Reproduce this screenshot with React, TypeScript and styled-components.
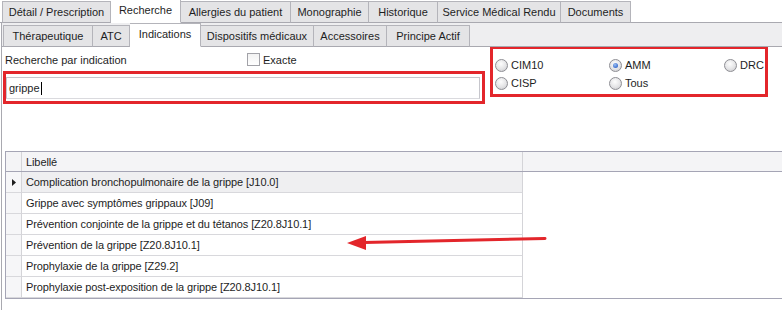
import React from 'react'
import styled, { createGlobalStyle } from 'styled-components'

const GlobalStyle = createGlobalStyle`
  html, body {
    margin: 0;
    padding: 0;
    background: #ffffff;
  }
  body {
    font-family: "Liberation Sans", Arial, sans-serif;
    font-size: 11px;
    color: #1e1e1e;
  }
`

const Window = styled.div`
  position: relative;
  width: 782px;
  height: 310px;
  overflow: hidden;
  background: #ffffff;
`

const TabStrip = styled.div<{ $band?: boolean }>`
  display: flex;
  align-items: flex-end;
  height: ${(p) => (p.$band ? '24px' : '23px')};
  padding-left: ${(p) => (p.$band ? '1px' : '2px')};
  background: ${(p) => (p.$band ? '#eeeef0' : '#ffffff')};
  border-bottom: 1px solid #a9a9b0;
  box-sizing: border-box;
  position: relative;
`

const Tab = styled.div<{ $active?: boolean; $width: number }>`
  width: ${(p) => p.$width}px;
  flex: none;
  height: ${(p) => (p.$active ? '24px' : '22px')};
  margin-bottom: -1px;
  display: flex;
  align-items: center;
  justify-content: center;
  box-sizing: border-box;
  background: ${(p) => (p.$active ? '#ffffff' : '#e4e4e6')};
  border: 1px solid #b4b4ba;
  border-bottom: ${(p) => (p.$active ? '1px solid #ffffff' : '1px solid #a9a9b0')};
  border-left: none;
  color: #1e1e1e;
  white-space: nowrap;
  position: relative;
  z-index: ${(p) => (p.$active ? 2 : 1)};
  padding-bottom: ${(p) => (p.$active ? '3px' : '0')};
  &:first-child {
    border-left: 1px solid #b4b4ba;
  }
`

const Page = styled.div`
  border-left: 1px solid #a9a9b0;
  margin-left: 1px;
  height: 400px;
`

const SearchRow = styled.div`
  display: flex;
  align-items: flex-start;
  padding-left: 1px;
`

const LeftColumn = styled.div`
  width: 482px;
  display: flex;
  flex-direction: column;
`

const LabelRow = styled.div`
  display: flex;
  align-items: center;
  height: 24px;
  padding: 2px 0 0 2px;
  box-sizing: border-box;
`

const Label = styled.span`
  width: 242px;
`

const CheckBox = styled.span`
  width: 11px;
  height: 11px;
  border: 1px solid #a2a2a8;
  background: linear-gradient(#f2f2f2, #ffffff);
  margin-right: 3px;
  margin-top: -1px;
`

const RedFrame = styled.div`
  border: 3px solid #e3262b;
  box-sizing: border-box;
`

const InputFrame = styled(RedFrame)`
  height: 33px;
  padding: 3px 2px 2px 0;
`

const TextInput = styled.div`
  height: 22px;
  border: 1px solid #c6c6cc;
  border-bottom-color: #dadade;
  box-sizing: border-box;
  display: flex;
  align-items: center;
  padding-left: 2px;
  color: #1e1e1e;
  background: #ffffff;
`

const Caret = styled.span`
  display: inline-block;
  width: 1px;
  height: 13px;
  background: #000000;
  margin-left: 1px;
`

const RadioFrame = styled(RedFrame)`
  width: 278px;
  height: 51px;
  margin-top: -1px;
  margin-left: 5px;
  padding: 7px 0 0 2px;
  display: grid;
  grid-template-columns: 114px 115px 1fr;
  grid-auto-rows: 18px;
`

const RadioItem = styled.label`
  display: flex;
  align-items: center;
  gap: 3px;
  white-space: nowrap;
`

const RadioDot = styled.span<{ $checked?: boolean }>`
  width: 11px;
  height: 11px;
  flex: none;
  border-radius: 50%;
  border: 1px solid #8e8e94;
  background: radial-gradient(circle at 45% 35%, #fdfdfd 0%, #e4e4e6 55%, #c4c4c8 100%);
  display: flex;
  align-items: center;
  justify-content: center;
  &::after {
    content: '';
    display: ${(p) => (p.$checked ? 'block' : 'none')};
    width: 5px;
    height: 5px;
    border-radius: 50%;
    background: radial-gradient(circle at 40% 35%, #9cc0f2 0%, #3d6fcf 70%, #2a55a8 100%);
  }
`

const Grid = styled.div`
  margin: 47px 0 0 3px;
  border: 1px solid #a5a5b5;
  border-right: none;
  width: 790px;
`

const GridRow = styled.div<{ $header?: boolean }>`
  display: flex;
  height: ${(p) => (p.$header ? '20px' : '21px')};
  background: ${(p) => (p.$header ? '#f4f4f6' : '#ffffff')};
  border-bottom: ${(p) => (p.$header ? '1px solid #a5a5b5' : 'none')};
  box-sizing: border-box;
`

const Indicator = styled.div<{ $header?: boolean }>`
  width: 16px;
  flex: none;
  border-right: 1px solid #d4d4d8;
  border-bottom: ${(p) => (p.$header ? 'none' : '1px solid #d8d8dc')};
  background: ${(p) => (p.$header ? '#f4f4f6' : '#f6f6f8')};
  box-sizing: border-box;
  display: flex;
  align-items: center;
  justify-content: center;
`

const Cell = styled.div<{ $header?: boolean; $selected?: boolean }>`
  width: 501px;
  flex: none;
  padding-left: 4px;
  display: flex;
  align-items: center;
  box-sizing: border-box;
  border-right: 1px solid #d4d4d8;
  border-bottom: ${(p) => (p.$header ? 'none' : '1px solid #d8d8dc')};
  background: ${(p) => (p.$selected ? '#efeff1' : 'transparent')};
  color: #1e1e1e;
  letter-spacing: -0.1px;
`

const Filler = styled.div`
  flex: 1;
`

const Arrow = styled.svg`
  position: absolute;
  left: 340px;
  top: 228px;
`

const topTabs = [
  { label: 'Détail / Prescription', width: 109 },
  { label: 'Recherche', width: 70, active: true },
  { label: 'Allergies du patient', width: 110 },
  { label: 'Monographie', width: 78 },
  { label: 'Historique', width: 69 },
  { label: 'Service Médical Rendu', width: 123 },
  { label: 'Documents', width: 70 },
]

const subTabs = [
  { label: 'Thérapeutique', width: 90 },
  { label: 'ATC', width: 37 },
  { label: 'Indications', width: 71, active: true },
  { label: 'Dispositifs médicaux', width: 113 },
  { label: 'Accessoires', width: 73 },
  { label: 'Principe Actif', width: 83 },
]

const rows = [
  'Complication bronchopulmonaire de la grippe [J10.0]',
  'Grippe avec symptômes grippaux [J09]',
  'Prévention conjointe de la grippe et du tétanos [Z20.8J10.1]',
  'Prévention de la grippe [Z20.8J10.1]',
  'Prophylaxie de la grippe [Z29.2]',
  'Prophylaxie post-exposition de la grippe [Z20.8J10.1]',
]

const radios = [
  { label: 'CIM10' },
  { label: 'AMM', checked: true },
  { label: 'DRC' },
  { label: 'CISP' },
  { label: 'Tous' },
]

export default function App() {
  return (
    <Window>
      <GlobalStyle />
      <TabStrip>
        {topTabs.map((t) => (
          <Tab key={t.label} $active={t.active} $width={t.width}>
            {t.label}
          </Tab>
        ))}
      </TabStrip>
      <Page>
        <TabStrip $band>
          {subTabs.map((t) => (
            <Tab key={t.label} $active={t.active} $width={t.width}>
              {t.label}
            </Tab>
          ))}
        </TabStrip>
        <SearchRow>
          <LeftColumn>
            <LabelRow>
              <Label>Recherche par indication</Label>
              <CheckBox />
              Exacte
            </LabelRow>
            <InputFrame>
              <TextInput>
                grippe
                <Caret />
              </TextInput>
            </InputFrame>
          </LeftColumn>
          <RadioFrame>
            {radios.map((r) => (
              <RadioItem key={r.label}>
                <RadioDot $checked={r.checked} />
                {r.label}
              </RadioItem>
            ))}
          </RadioFrame>
        </SearchRow>
        <Grid>
          <GridRow $header>
            <Indicator $header />
            <Cell $header>Libellé</Cell>
            <Filler />
          </GridRow>
          {rows.map((r, i) => (
            <GridRow key={r}>
              <Indicator>
                {i === 0 && (
                  <svg width="4" height="7" viewBox="0 0 4 7">
                    <path d="M0 0 L4 3.5 L0 7 Z" fill="#1e1e1e" />
                  </svg>
                )}
              </Indicator>
              <Cell $selected={i === 0}>{r}</Cell>
              <Filler />
            </GridRow>
          ))}
        </Grid>
      </Page>
      <Arrow width="210" height="24" viewBox="0 0 210 24">
        <path d="M205 10.5 L24 14.5" stroke="#e3262b" strokeWidth="3" strokeLinecap="round" />
        <path d="M7 15 L26 8 L26 22 Z" fill="#e3262b" />
      </Arrow>
    </Window>
  )
}
